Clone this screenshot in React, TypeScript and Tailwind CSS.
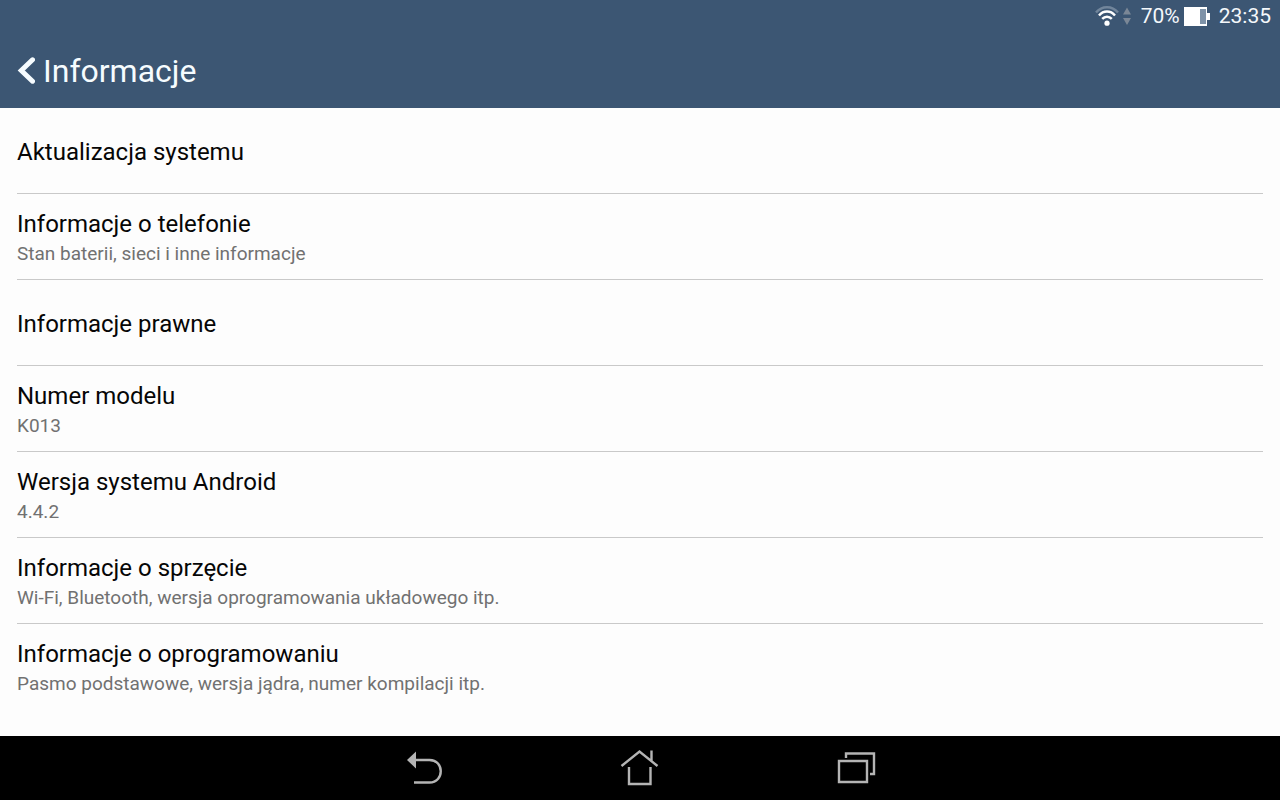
type Entry = { title: string; summary?: string };

const entries: Entry[] = [
  { title: "Aktualizacja systemu" },
  { title: "Informacje o telefonie", summary: "Stan baterii, sieci i inne informacje" },
  { title: "Informacje prawne" },
  { title: "Numer modelu", summary: "K013" },
  { title: "Wersja systemu Android", summary: "4.4.2" },
  { title: "Informacje o sprzęcie", summary: "Wi-Fi, Bluetooth, wersja oprogramowania układowego itp." },
  { title: "Informacje o oprogramowaniu", summary: "Pasmo podstawowe, wersja jądra, numer kompilacji itp." },
];

function StatusBar() {
  return (
    <div className="flex h-8 items-center justify-end pr-[9px] text-[21px] leading-8 text-[#f4f8fb]">
      <svg className="h-8 w-6" viewBox="0 0 24 32" fill="none" aria-label="Wi-Fi">
        <path d="M1 12.5C7 5.5 17 5.5 23 12.5" stroke="#71859b" strokeWidth="2.5" />
        <path d="M4 15.5C8.5 10.3 15.5 10.3 20 15.5" stroke="#fff" strokeWidth="2.5" />
        <path d="M7.2 18.9C10 16 14 16 16.8 18.9" stroke="#fff" strokeWidth="2.5" />
        <circle cx="12" cy="23.2" r="2.6" fill="#fff" />
      </svg>
      <svg className="ml-1 h-8 w-2" viewBox="0 0 8 32" fill="#7b8796" aria-hidden="true">
        <path d="M4 7.5L8 14.5H0ZM4 25L0 18H8Z" />
      </svg>
      <span className="ml-2.5">70%</span>
      <svg className="ml-1 h-8 w-[26px]" viewBox="0 0 26 32" aria-label="Bateria">
        <path d="M0 7H23V13H26V20H23V26H0Z" fill="#fff" />
        <path d="M16 9H22V24H16Z" fill="#7f93a8" />
      </svg>
      <time className="ml-[9px]">23:35</time>
    </div>
  );
}

export default function App() {
  return (
    <div className="flex min-h-screen flex-col bg-[#fdfdfd] font-['Roboto','Noto_Sans',sans-serif]">
      <header className="bg-[#3c5673]">
        <StatusBar />
        <div className="flex h-[76px] items-center px-[17px] pt-0.5">
          <button type="button" className="flex items-center gap-2 text-[#f6fcff]">
            <svg className="h-8 w-[18px]" viewBox="0 0 18 32" fill="none" aria-hidden="true">
              <path d="M15.5 4.8L4.3 15.5L15.5 26.2" stroke="currentColor" strokeWidth="5" strokeLinecap="round" />
            </svg>
            <h1 className="text-[32px] leading-10 font-normal">Informacje</h1>
          </button>
        </div>
      </header>
      <main className="flex-1 px-[17px]">
        <ul className="divide-y divide-[#c9c9c9]">
          {entries.map((entry) => (
            <li key={entry.title}>
              <button type="button" className="flex h-[85px] w-full flex-col justify-center pt-0.5 text-left">
                <span className="text-2xl leading-8 text-[#060606]">{entry.title}</span>
                {entry.summary && <span className="text-[19px] leading-7 text-[#717171]">{entry.summary}</span>}
              </button>
            </li>
          ))}
        </ul>
      </main>
      <nav className="flex h-16 items-center justify-center gap-[152px] bg-black text-[#b4b4b4]">
        <button type="button" aria-label="Wstecz">
          <svg className="size-16" viewBox="392 736 64 64" fill="none">
            <path d="M415 760H429.5C444.5 760 444.5 782.5 429.5 782.5H414" stroke="currentColor" strokeWidth="2.4" />
            <path d="M407 760L416 751.5V768.5Z" fill="currentColor" />
          </svg>
        </button>
        <button type="button" aria-label="Ekran główny">
          <svg className="size-16" viewBox="608 736 64 64" fill="none" stroke="currentColor" strokeWidth="2.4">
            <path d="M621.5 766L639.5 751.5L657.5 766M651.5 750.5V761M629 767V784H650.5V767" />
          </svg>
        </button>
        <button type="button" aria-label="Ostatnie aplikacje">
          <svg className="size-16" viewBox="824 736 64 64" fill="none" stroke="currentColor" strokeWidth="2.4">
            <path d="M839 761H867V782H839ZM846 758V753.5H874V774H870" />
          </svg>
        </button>
      </nav>
    </div>
  );
}
